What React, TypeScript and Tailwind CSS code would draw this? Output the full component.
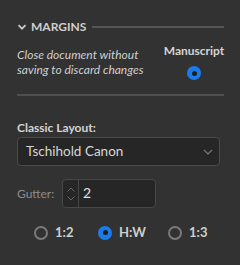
import React from "react";

const Radio = ({ checked }: { checked?: boolean }) =>
  checked ? (
    <span className="flex h-[14px] w-[14px] items-center justify-center rounded-full bg-[#1b7bea]">
      <span className="h-[5px] w-[5px] rounded-full bg-[#1d1d1d]" />
    </span>
  ) : (
    <span className="h-[14px] w-[14px] rounded-full border-2 border-[#7a7a7a]" />
  );

export default function App() {
  return (
    <div
      className="h-[265px] w-[240px] bg-[#323232] text-[#d2d2d2]"
      style={{ fontFamily: 'Lato, "Noto Sans", sans-serif' }}
    >
      <div className="pl-[17px] pr-[16px] pt-[20px]">
        <div className="flex h-[14px] items-center">
          <svg width="10" height="10" viewBox="0 0 10 10" className="mr-[4px]">
            <path d="M1.5 3.2 L5 6.7 L8.5 3.2" fill="none" stroke="#c8c8c8" strokeWidth="1.8" />
          </svg>
          <span className="text-[12px] font-bold leading-none text-[#cfcfcf]">MARGINS</span>
          <div className="ml-[6px] h-[2px] flex-1 bg-[#555555]" />
        </div>
        <div className="mt-[13px] flex">
          <div className="flex-1 text-[12px] italic leading-[15px] text-[#cfcfcf]">
            Close document without
            <br />
            saving to discard changes
          </div>
          <div className="flex w-[60px] flex-col items-center">
            <span className="mt-[-4px] text-[12px] font-bold leading-[15px] text-[#d4d4d4]">Manuscript</span>
            <div className="mt-[8px]">
              <Radio checked />
            </div>
          </div>
        </div>
        <div className="mt-[14px] h-[2px] bg-[#4f4f4f]" />
        <div className="mt-[24px] text-[12px] font-bold leading-[15px] text-[#d4d4d4]">Classic Layout:</div>
        <div className="mr-[4px] mt-[2px] flex h-[29px] items-center justify-between rounded-[4px] border border-[#4a4a4a] bg-[#262626] pl-[8px] pr-[6px]">
          <span className="text-[13.5px] text-[#d6d6d6]">Tschihold Canon</span>
          <svg width="10" height="6" viewBox="0 0 10 6">
            <path d="M1 1 L5 5 L9 1" fill="none" stroke="#777" strokeWidth="1.2" />
          </svg>
        </div>
        <div className="mt-[13px] flex items-center">
          <span className="w-[45px] text-[12px] text-[#8d8d8d]">Gutter:</span>
          <div className="flex h-[29px] w-[94px] rounded-[4px] border border-[#474747] bg-[#262626]">
            <div className="flex w-[16px] flex-col items-center justify-center gap-[4px] border-r border-[#474747]">
              <svg width="8" height="5" viewBox="0 0 8 5">
                <path d="M0.5 4.5 L4 1 L7.5 4.5" fill="none" stroke="#666" strokeWidth="1" />
              </svg>
              <svg width="8" height="5" viewBox="0 0 8 5">
                <path d="M0.5 0.5 L4 4 L7.5 0.5" fill="none" stroke="#666" strokeWidth="1" />
              </svg>
            </div>
            <span className="pl-[4px] pt-[4px] text-[14px] leading-[18px] text-[#e0e0e0]">2</span>
          </div>
        </div>
        <div className="mt-[15px] flex items-center pl-[17px]">
          <div className="flex w-[64px] items-center">
            <Radio />
            <span className="ml-[7px] text-[13px] font-bold text-[#cfcfcf]">1:2</span>
          </div>
          <div className="flex w-[70px] items-center">
            <Radio checked />
            <span className="ml-[7px] text-[13px] font-bold text-[#cfcfcf]">H:W</span>
          </div>
          <div className="flex items-center">
            <Radio />
            <span className="ml-[7px] text-[13px] font-bold text-[#cfcfcf]">1:3</span>
          </div>
        </div>
      </div>
    </div>
  );
}
